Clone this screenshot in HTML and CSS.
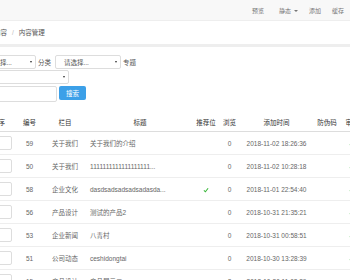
FILE: index.html
```html
<!DOCTYPE html>
<html lang="zh">
<head>
    <meta charset="UTF-8">
    <title>内容管理</title>
    <link rel="stylesheet" href="styles.css">
</head>
<body>
    <div class="topbar">
        <a href="#" class="first">预览</a>
        <a href="#">静态<span class="caret"></span></a>
        <a href="#">添加</a>
        <a href="#">缓存</a>
    </div>

    <div class="page">
        <div class="crumb">内容<span class="sep">/</span>内容管理</div>

        <form class="filter">
            <div class="filter-row">
                <div class="select w1"><span>请选择...</span><span class="dot"></span></div>
                <label class="lbl">分类</label>
                <div class="select w2"><span>请选择...</span><span class="dot"></span></div>
                <label class="lbl">专题</label>
            </div>
            <div class="filter-row">
                <div class="select w3"><span></span><span class="dot"></span></div>
            </div>
            <div class="filter-row search">
                <input class="kw" type="text">
                <button class="btn" type="button">搜索</button>
            </div>
        </form>

        <table class="list">
            <colgroup>
                <col style="width:33px">
                <col style="width:29px">
                <col style="width:42px">
                <col style="width:108px">
                <col style="width:24px">
                <col style="width:23px">
                <col style="width:71px">
                <col style="width:30px">
                <col style="width:20px">
                <col style="width:40px">
            </colgroup>
            <thead>
                <tr>
                    <th>排序</th>
                    <th>编号</th>
                    <th>栏目</th>
                    <th>标题</th>
                    <th>推荐位</th>
                    <th>浏览</th>
                    <th>添加时间</th>
                    <th>防伪码</th>
                    <th>审核</th>
                    <th>操作</th>
                </tr>
            </thead>
            <tbody id="rows"></tbody>
        </table>
    </div>

    <script>
        // 列表数据
        const items = [
            { id: 59, cat: '关于我们', title: '关于我们的介绍', rec: false, views: 0, time: '2018-11-02 18:26:36' },
            { id: 50, cat: '关于我们', title: '1111111111111111111...', rec: false, views: 0, time: '2018-11-02 10:28:18' },
            { id: 58, cat: '企业文化', title: 'dasdsadsadsadsadasda...', rec: true, views: 0, time: '2018-11-01 22:54:40' },
            { id: 56, cat: '产品设计', title: '测试的产品2', rec: false, views: 0, time: '2018-10-31 21:35:21' },
            { id: 53, cat: '企业新闻', title: '八青村', rec: false, views: 0, time: '2018-10-31 00:58:51' },
            { id: 51, cat: '公司动态', title: 'ceshidongtai', rec: false, views: 0, time: '2018-10-30 13:28:39' },
            { id: 15, cat: '产品设计', title: '产品展示二', rec: false, views: 2, time: '2018-10-30 11:02:39' }
        ];

        const check = '<svg class="ok" viewBox="0 0 10 10"><path d="M1.5 5.5 L4 8 L8.5 2" fill="none" stroke="#3cb83c" stroke-width="1.8"/></svg>';

        let html = '';
        items.forEach(item => {
            html += `<tr>
                <td><input class="sort" type="text"></td>
                <td>${item.id}</td>
                <td>${item.cat}</td>
                <td class="title">${item.title}</td>
                <td>${item.rec ? check : ''}</td>
                <td>${item.views}</td>
                <td>${item.time}</td>
                <td></td>
                <td>${check}</td>
                <td></td>
            </tr>`;
        });
        document.getElementById('rows').innerHTML = html;
    </script>
</body>
</html>
```

FILE: styles.css
```css
html, body {
    margin: 0;
    overflow: hidden;
}
body {
    font-family: "Liberation Sans", "Noto Sans CJK SC", sans-serif;
    font-size: 6.5px;
    color: #666;
    background-color: #fff;
}
.topbar {
    height: 20px;
    padding-right: 6px;
    background-color: #f8f8f8;
    border-bottom: 1px solid #eee;
    display: flex;
    justify-content: flex-end;
    align-items: center;
    gap: 11px;
    font-size: 6px;
}
.topbar a {
    color: #777;
    text-decoration: none;
}
.topbar .first {
    margin-right: 4px;
}
.caret {
    display: inline-block;
    border-top: 2.5px solid #777;
    border-left: 2px solid transparent;
    border-right: 2px solid transparent;
    vertical-align: middle;
    margin-left: 3px;
}
.page {
    margin-left: -22px;
}
.crumb {
    height: 23px;
    line-height: 23px;
    padding-left: 16px;
    border-bottom: 3px solid #eee;
    color: #555;
}
.crumb .sep {
    color: #bbb;
    padding: 0 5px;
}
.filter {
    padding-top: 8px;
    display: flex;
    flex-direction: column;
    gap: 1px;
}
.filter-row {
    display: flex;
    align-items: center;
}
.select {
    height: 14px;
    box-sizing: border-box;
    border: 1px solid #ddd;
    border-radius: 2px;
    background-color: #fff;
    display: flex;
    justify-content: space-between;
    align-items: center;
    padding: 0 3px 0 8px;
    color: #555;
}
.dot {
    border-top: 2.5px solid #333;
    border-left: 1.5px solid transparent;
    border-right: 1.5px solid transparent;
}
.w1 { width: 58px; }
.w2 { width: 66px; }
.w3 { width: 91px; }
.lbl {
    color: #555;
    margin: 0 4px 0 2px;
}
.search {
    margin-top: 1px;
    align-items: flex-start;
}
.kw {
    width: 79px;
    height: 16px;
    box-sizing: border-box;
    border: 1px solid #ddd;
    border-radius: 2px;
    margin: 0;
}
.btn {
    width: 27px;
    height: 14px;
    margin-left: 2px;
    padding: 0;
    border: none;
    border-radius: 2px;
    background-color: #3ca0e8;
    color: #fff;
    font-family: inherit;
    font-size: 6.5px;
}
.list {
    margin: 12px 0 0 4px;
    width: 420px;
    table-layout: fixed;
    border-collapse: collapse;
}
.list th {
    height: 17px;
    padding: 0 2px;
    line-height: 7px;
    color: #333;
    font-weight: normal;
    text-align: center;
    border-bottom: 1px solid #ddd;
    white-space: nowrap;
}
.list td {
    height: 22px;
    padding: 0 2px;
    text-align: center;
    vertical-align: middle;
    border-bottom: 1px solid #eee;
    white-space: nowrap;
    overflow: hidden;
}
.list td.title {
    text-align: left;
    padding-left: 4px;
}
.sort {
    display: block;
    margin: 0 auto;
    width: 27px;
    height: 14px;
    box-sizing: border-box;
    border: 1px solid #ddd;
    border-radius: 2px;
    padding: 0;
}
.ok {
    width: 6px;
    height: 6px;
    vertical-align: middle;
}
```
